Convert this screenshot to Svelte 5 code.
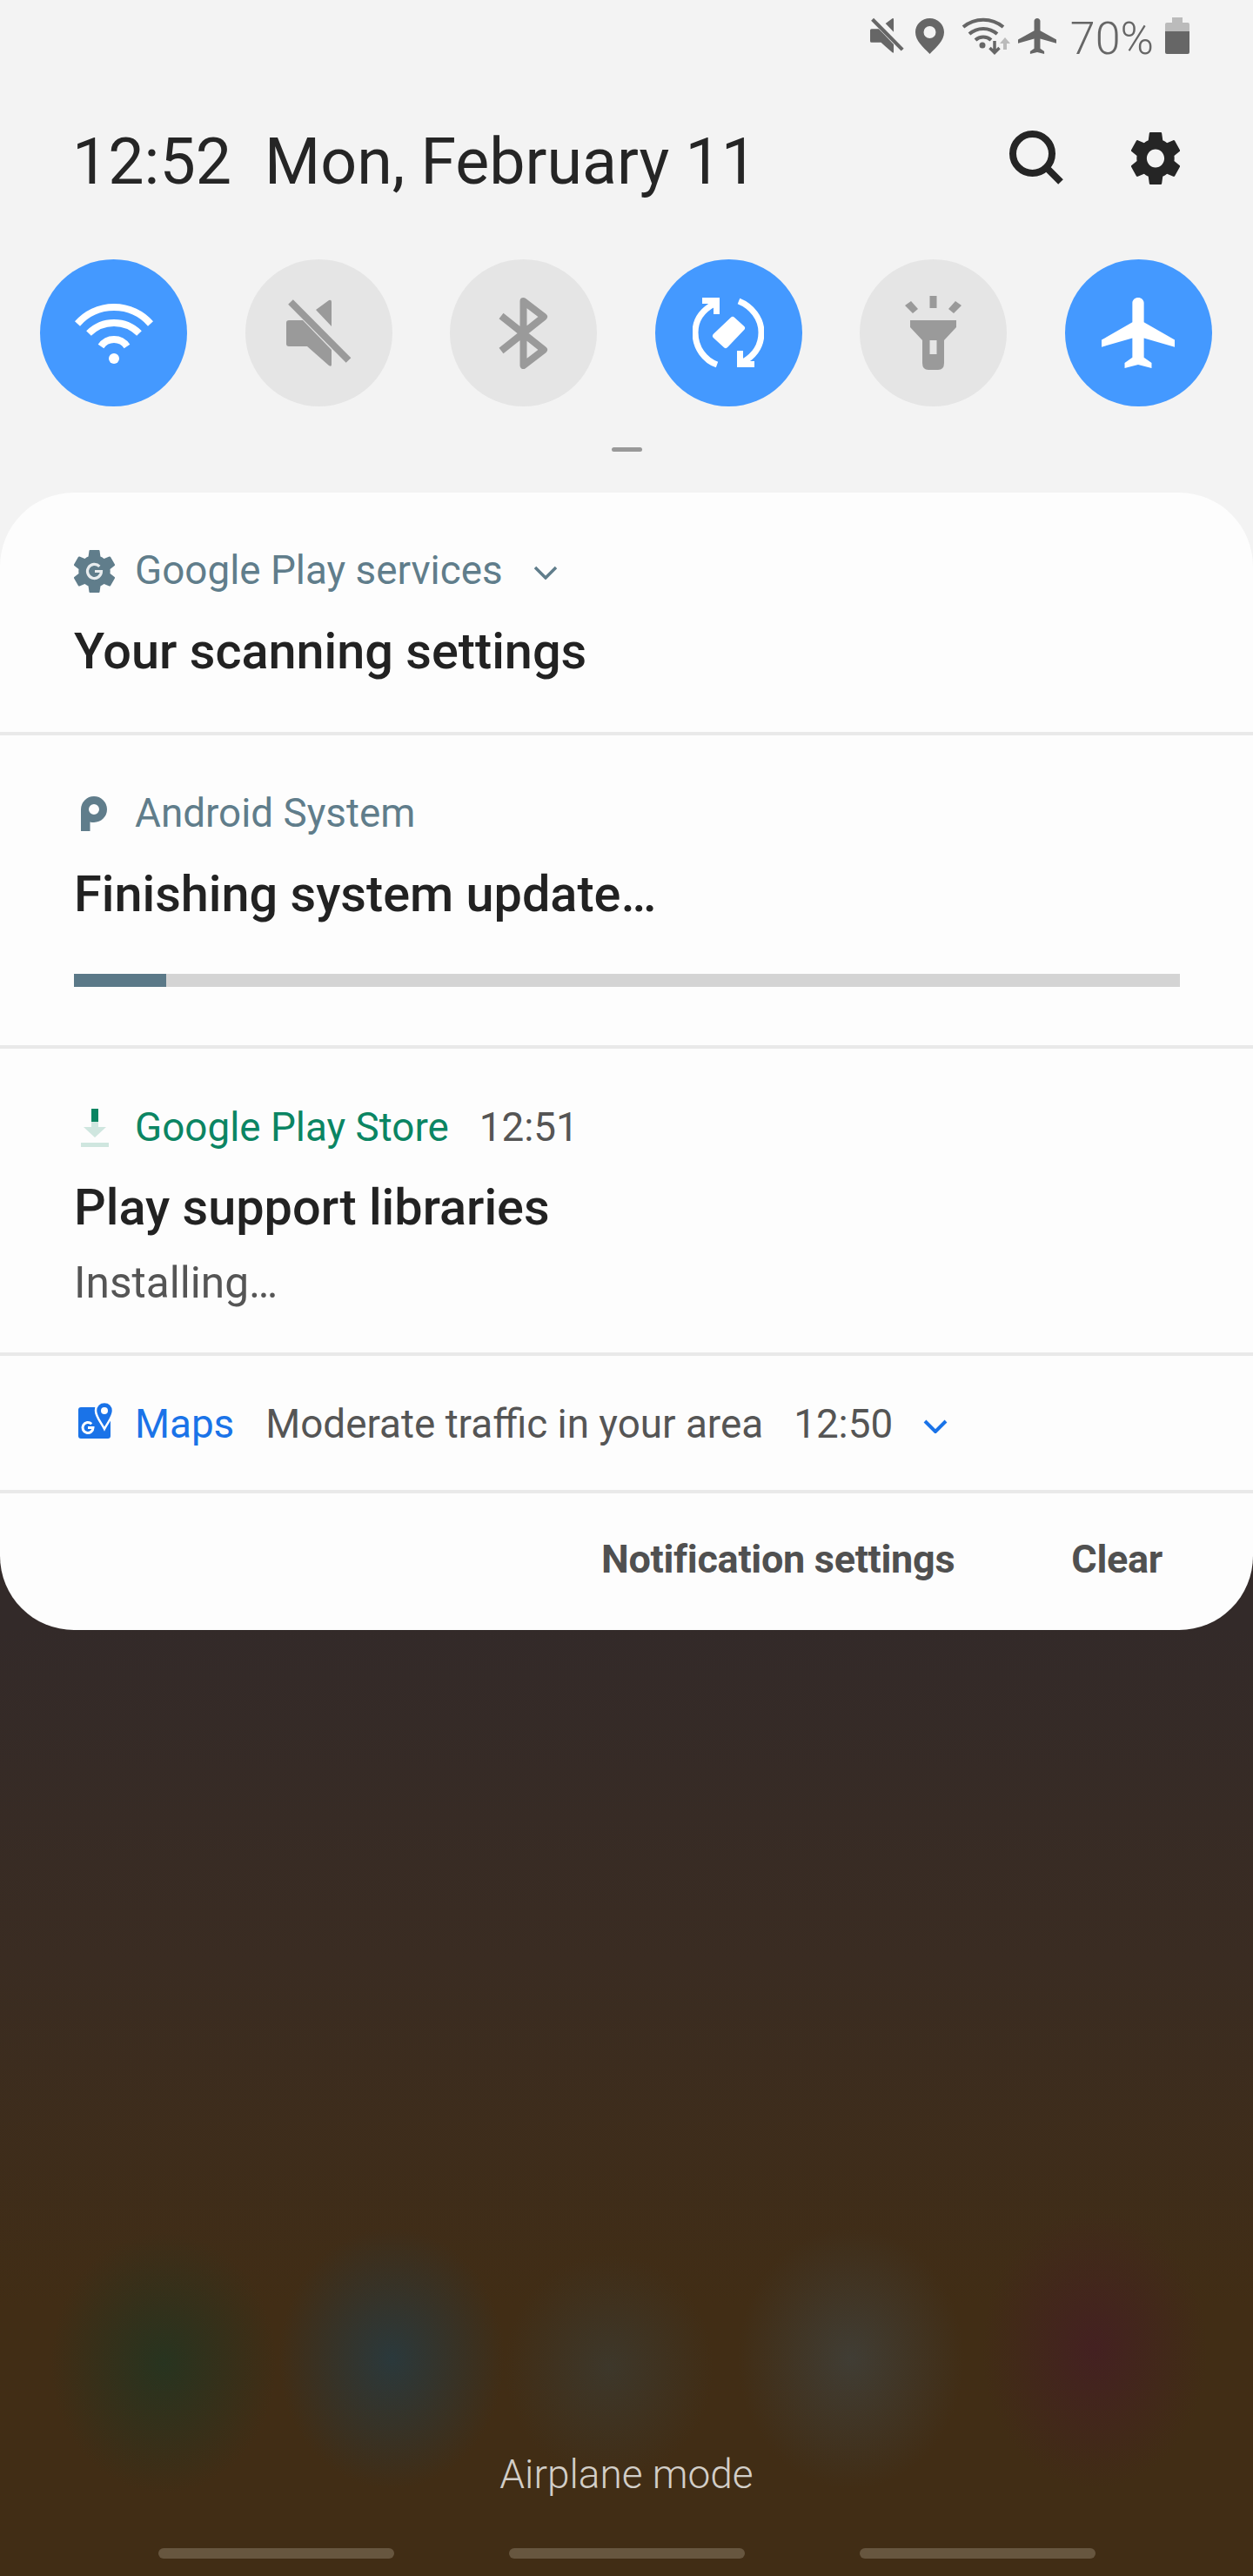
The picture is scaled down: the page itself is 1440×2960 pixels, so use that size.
<script>
  const gearPath = "M19.43 12.98c.04-.32.07-.64.07-.98s-.03-.66-.07-.98l2.11-1.65c.19-.15.24-.42.12-.64l-2-3.46c-.12-.22-.39-.3-.61-.22l-2.49 1c-.52-.4-1.08-.73-1.69-.98l-.38-2.65C14.46 2.18 14.25 2 14 2h-4c-.25 0-.46.18-.49.42l-.38 2.65c-.61.25-1.17.59-1.69.98l-2.49-1c-.23-.09-.49 0-.61.22l-2 3.46c-.13.22-.07.49.12.64l2.11 1.65c-.04.32-.07.65-.07.98s.03.66.07.98l-2.11 1.65c-.19.15-.24.42-.12.64l2 3.46c.12.22.39.3.61.22l2.49-1c.52.4 1.08.73 1.69.98l.38 2.65c.03.24.24.42.49.42h4c.25 0 .46-.18.49-.42l.38-2.65c.61-.25 1.17-.59 1.69-.98l2.49 1c.23.09.49 0 .61-.22l2-3.46c.12-.22.07-.49-.12-.64l-2.11-1.65zM12 15.5c-1.93 0-3.5-1.57-3.5-3.5s1.57-3.5 3.5-3.5 3.5 1.57 3.5 3.5-1.57 3.5-3.5 3.5z";
  const planePath = "M21 16v-2l-8-5V3.5c0-.83-.67-1.5-1.5-1.5S10 2.67 10 3.5V9l-8 5v2l8-2.5V19l-2 1.5V22l3.5-1 3.5 1v-1.5L13 19v-5.5l8 2.5z";
  const mutePath = "M3 24H19L52 58V75Q52 78 49 76L24 54H3Q0 54 0 51V27Q0 24 3 24ZM34 12L49 1Q52 0 52 3V31Z";
</script>

<div class="screen">
  <div class="status">
    <svg class="st-mute" width="39" height="42" viewBox="0 0 75 78" fill="#666">
      <path d={mutePath} />
      <path d="M5 3L71.5 70" stroke="#666" stroke-width="8" />
    </svg>
    <svg class="st-loc" width="33" height="41" viewBox="0 0 33 41" fill="#666">
      <path fill-rule="evenodd" d="M16.500 0C25.600 0 33 7 33 16C33 26 24 33 16.500 41C9 33 0 26 0 16C0 7 7.400 0 16.500 0ZM16.500 9A7 7 0 1 0 16.500 23A7 7 0 1 0 16.500 9Z" />
    </svg>
    <svg class="st-wifi" width="60" height="44" viewBox="0 0 60 44" fill="none" stroke="#666" stroke-width="4">
      <path d="M3 12A36 36 0 0 1 49 12M10 20A24 24 0 0 1 42 20M17 27A13 13 0 0 1 35 27" />
      <circle cx="25" cy="33" r="3.500" fill="#666" stroke="none" />
      <path d="M39 28V41M33.500 36L39 41.500L44.500 36" stroke-width="3.500" />
      <path d="M51 38V28" stroke="#bbb" stroke-width="4" />
      <path d="M45 31L51 24L57 31Z" fill="#bbb" stroke="none" />
    </svg>
    <svg class="st-plane" width="44" height="41" viewBox="2 2 19 20" preserveAspectRatio="none" fill="#666">
      <path d={planePath} />
    </svg>
    <span class="st-batt">70%</span>
    <svg class="st-battery" width="28" height="42" viewBox="0 0 28 42">
      <path d="M8 0H20V6H26Q28 6 28 8V16H0V8Q0 6 2 6H8Z" fill="#bbb" />
      <path d="M0 16H28V40Q28 42 26 42H2Q0 42 0 40Z" fill="#666" />
    </svg>
  </div>

  <header class="clock">
    <div class="when"><span>12:52</span><span>Mon, February 11</span></div>
    <svg class="search" width="62" height="62" viewBox="0 0 62 62" fill="none" stroke="#252525" stroke-width="8">
      <circle cx="26.500" cy="26.500" r="22.500" />
      <path d="M43 43L59 59" />
    </svg>
    <svg class="gear" width="56" height="60" viewBox="2.300 2 19.400 20" preserveAspectRatio="none" fill="#252525">
      <path d={gearPath} />
    </svg>
  </header>

  <div class="toggles">
    <div class="toggle on">
      <svg width="92" height="70" viewBox="0 0 92 70" fill="none" stroke="#fff" stroke-width="8">
        <path d="M4 24A56 56 0 0 1 88 24M17 35A41 41 0 0 1 75 35M31 50A18 18 0 0 1 61 50" />
        <circle cx="46" cy="64" r="6" fill="#fff" stroke="none" />
      </svg>
    </div>
    <div class="toggle">
      <svg width="75" height="78" viewBox="0 0 75 78" fill="#9a9a9a">
        <path d={mutePath} />
        <path d="M5 3L71.500 70" stroke="#9a9a9a" stroke-width="8" />
      </svg>
    </div>
    <div class="toggle">
      <svg width="57" height="82" viewBox="0 0 57 82" fill="none" stroke="#9a9a9a" stroke-width="8" stroke-linejoin="round">
        <path d="M3 21L52 60L28.500 78V4L52 22L3 61" />
      </svg>
    </div>
    <div class="toggle on">
      <svg width="82" height="81" viewBox="0 0 82 81" fill="none" stroke="#fff" stroke-width="7">
        <path d="M25 7C8 16 3 28 3 40C3 58 14 72 28 77M53 4C68 10 79 24 79 40C79 54 72 66 58 74" />
        <path d="M11 0H31V19H24V7H11ZM71 80H51V61H58V73H71Z" fill="#fff" stroke="none" />
        <path d="M46 25L57 35L38 55L26 44Z" fill="#fff" stroke="#fff" stroke-width="6" stroke-linejoin="round" />
      </svg>
    </div>
    <div class="toggle">
      <svg width="65" height="85" viewBox="0 0 65 85" fill="#9a9a9a">
        <path d="M28.500 0H36.500V14H28.500ZM0 11L7 6L15 15L9 20ZM65 11L58 6L50 15L56 20Z" />
        <path fill-rule="evenodd" d="M6 28H59V36L45 51V77Q45 85 38 85H27Q20 85 20 77V51L6 36ZM28.500 51V67H36.500V51Z" />
      </svg>
    </div>
    <div class="toggle on">
      <svg width="84" height="81" viewBox="2 2 19 20" preserveAspectRatio="none" fill="#fff">
        <path d={planePath} />
      </svg>
    </div>
  </div>

  <div class="handle"></div>

  <section class="panel">
    <article class="row first">
      <div class="head">
        <span class="slot">
          <svg width="47" height="49" viewBox="2.300 2 19.400 20" preserveAspectRatio="none">
            <path d={gearPath} fill="#607d8b" />
            <circle cx="12" cy="12" r="3.800" fill="#607d8b" />
            <path d="M14.400 9.700A3.300 3.300 0 1 0 15.300 12H12.200" fill="none" stroke="#e8ecee" stroke-width="1.300" />
          </svg>
        </span>
        <span class="app slate">Google Play services</span>
        <svg class="chev" width="28" height="16" viewBox="0 0 28 16" fill="none" stroke="#607d8b" stroke-width="3.500"><path d="M2 2L14 14L26 2" /></svg>
      </div>
      <h2>Your scanning settings</h2>
    </article>

    <article class="row second">
      <div class="head">
        <span class="slot">
          <svg class="p-logo" width="30" height="40" viewBox="0 0 30 40">
            <path fill-rule="evenodd" fill="#607d8b" d="M0 15A15 15 0 1 1 15 30Q12 30 10.500 29.500V40H0ZM15 9A6 6 0 1 0 15 21A6 6 0 1 0 15 9Z" />
          </svg>
        </span>
        <span class="app slate">Android System</span>
      </div>
      <h2>Finishing system update…</h2>
      <div class="track"><div class="fill" style="width: {(106 / 1272) * 100}%"></div></div>
    </article>

    <article class="row third">
      <div class="head">
        <span class="slot">
          <svg class="dl" width="32" height="44" viewBox="0 0 32 44">
            <path d="M12 0H20V15H12Z" fill="#0a8562" />
            <path d="M12 15H20V21H29L16 33L3 21H12ZM0 39H32V44H0Z" fill="#cfe6df" />
          </svg>
        </span>
        <span class="app green">Google Play Store</span>
        <span class="time">12:51</span>
      </div>
      <h2>Play support libraries</h2>
      <p>Installing…</p>
    </article>

    <article class="row maps">
      <span class="slot">
        <svg class="maps-icon" width="40" height="44" viewBox="0 0 40 44">
          <path d="M3 7H34Q37 7 37 10V40Q37 43 34 43H3Q0 43 0 40V10Q0 7 3 7Z" fill="#1a73e8" />
          <path d="M15.200 26.200A6 6 0 1 0 17 30.500H11" fill="none" stroke="#fff" stroke-width="3" />
          <path d="M30 1C36 1 40 5 40 11C40 18 34 24 30 32C26 24 20 18 20 11C20 5 24 1 30 1Z" fill="#1a73e8" stroke="#fff" stroke-width="2.500" />
          <circle cx="30" cy="11" r="4" fill="#fff" />
        </svg>
      </span>
      <span class="app blue">Maps</span>
      <span class="summary">Moderate traffic in your area</span>
      <span class="time">12:50</span>
      <svg class="chev" width="28" height="16" viewBox="0 0 28 16" fill="none" stroke="#1a73e8" stroke-width="4"><path d="M2 2L14 14L26 2" /></svg>
    </article>

    <footer class="actions">
      <span>Notification settings</span>
      <span>Clear</span>
    </footer>
  </section>

  <div class="hint">Airplane mode</div>
  <div class="navbar">
    <span></span>
    <span></span>
    <span></span>
  </div>
</div>

<style>
  :global(body) {
    margin: 0;
    font-family: Roboto, sans-serif;
  }
  .screen {
    width: 1440px;
    height: 2960px;
    display: flex;
    flex-direction: column;
    overflow: hidden;
    background:
      linear-gradient(#f3f3f3 0 700px, transparent 700px),
      radial-gradient(ellipse 130px 150px at 188px 2715px, rgba(38, 52, 32, 0.95), rgba(38, 52, 32, 0)),
      radial-gradient(ellipse 130px 150px at 450px 2710px, rgba(40, 58, 64, 0.9), rgba(40, 58, 64, 0)),
      radial-gradient(ellipse 120px 130px at 700px 2720px, rgba(60, 58, 48, 0.8), rgba(60, 58, 48, 0)),
      radial-gradient(ellipse 130px 150px at 978px 2710px, rgba(64, 64, 58, 0.85), rgba(64, 64, 58, 0)),
      radial-gradient(ellipse 130px 160px at 1258px 2700px, rgba(68, 32, 34, 0.95), rgba(68, 32, 34, 0)),
      linear-gradient(#332a29 1870px, #3a2c22 2250px, #412d15 2650px);
  }

  /* status bar */
  .status {
    display: flex;
    align-items: flex-start;
    justify-content: flex-end;
    height: 42px;
    padding: 20px 73px 0 0;
  }
  .st-loc { margin: 1px 0 0 13px; }
  .st-wifi { margin: -1px 0 0 19px; }
  .st-plane { margin: 1px 0 0 6px; }
  .st-batt {
    margin-left: 16px;
    font-size: 52px;
    font-weight: 300;
    line-height: 50px;
    color: #666;
  }
  .st-battery { margin-left: 13px; }

  /* clock row */
  .clock {
    display: flex;
    align-items: center;
    height: 60px;
    margin-top: 90px;
    padding: 0 84px 0 83px;
    color: #252525;
  }
  .when {
    flex: 1;
    align-self: flex-start;
    display: flex;
    gap: 38px;
    font-size: 73.5px;
    line-height: 68px;
  }
  .search { margin: -2px 78px 0 0; }

  /* quick toggles */
  .toggles {
    display: flex;
    justify-content: space-between;
    margin-top: 86px;
    padding: 0 47px 0 46px;
  }
  .toggle {
    width: 169px;
    height: 169px;
    border-radius: 50%;
    background: #e5e5e5;
    display: flex;
    align-items: center;
    justify-content: center;
  }
  .toggle.on { background: #4499ff; }
  .handle {
    width: 35px;
    height: 5px;
    margin: 47px auto;
    border-radius: 3px;
    background: #999;
  }

  /* notification panel */
  .panel {
    height: 1307px;
    border-radius: 85px;
    background: #fdfdfd;
    display: flex;
    flex-direction: column;
  }
  .row {
    box-sizing: border-box;
    border-bottom: 4px solid #e9e9e9;
    padding: 0 84px 0 85px;
  }
  .first { height: 279px; padding-top: 60px; }
  .second { height: 360px; padding-top: 60px; }
  .third { height: 353px; padding-top: 61px; }
  .third h2 { margin-top: 27px; }
  .head {
    display: flex;
    align-items: center;
    height: 60px;
  }
  .slot {
    flex: none;
    width: 70px;
    display: flex;
    align-items: center;
  }
  .p-logo { margin-left: 8px; }
  .dl { margin-left: 8px; }
  .maps-icon { margin: -10px 0 0 5px; }
  .app {
    font-size: 45.8px;
    line-height: 60px;
  }
  .slate { color: #607d8b; }
  .green { color: #0b8563; }
  .blue { color: #1a73e8; }
  .time {
    margin-left: 35px;
    font-size: 45.8px;
    line-height: 60px;
    color: #555;
  }
  .chev { margin: 4px 0 0 35px; }
  h2 {
    margin: 28px 0 0;
    font-size: 57.6px;
    font-weight: 500;
    line-height: 70px;
    color: #222;
  }
  p {
    margin: 16px 0 0;
    font-size: 49.6px;
    line-height: 70px;
    color: #555;
  }
  .track {
    height: 15px;
    margin-top: 56px;
    background: #d4d4d4;
  }
  .fill {
    height: 100%;
    background: #5b7988;
  }
  .maps {
    height: 158px;
    padding-top: 3px;
    display: flex;
    align-items: center;
  }
  .summary {
    margin-left: 36px;
    font-size: 45.8px;
    line-height: 60px;
    color: #555;
  }
  .actions {
    flex: 1;
    display: flex;
    align-items: center;
    justify-content: flex-end;
    gap: 134px;
    padding: 0 104px 6px 0;
    font-size: 45px;
    font-weight: 700;
    letter-spacing: -0.3px;
    color: #505050;
  }

  /* below the panel */
  .hint {
    margin-top: auto;
    text-align: center;
    font-size: 46px;
    font-weight: 300;
    line-height: 50px;
    color: #d2cec8;
  }
  .navbar {
    display: flex;
    justify-content: center;
    gap: 132px;
    margin: 60px 0 20px;
  }
  .navbar span {
    width: 271px;
    height: 12px;
    border-radius: 6px;
    background: #67563f;
  }
</style>
